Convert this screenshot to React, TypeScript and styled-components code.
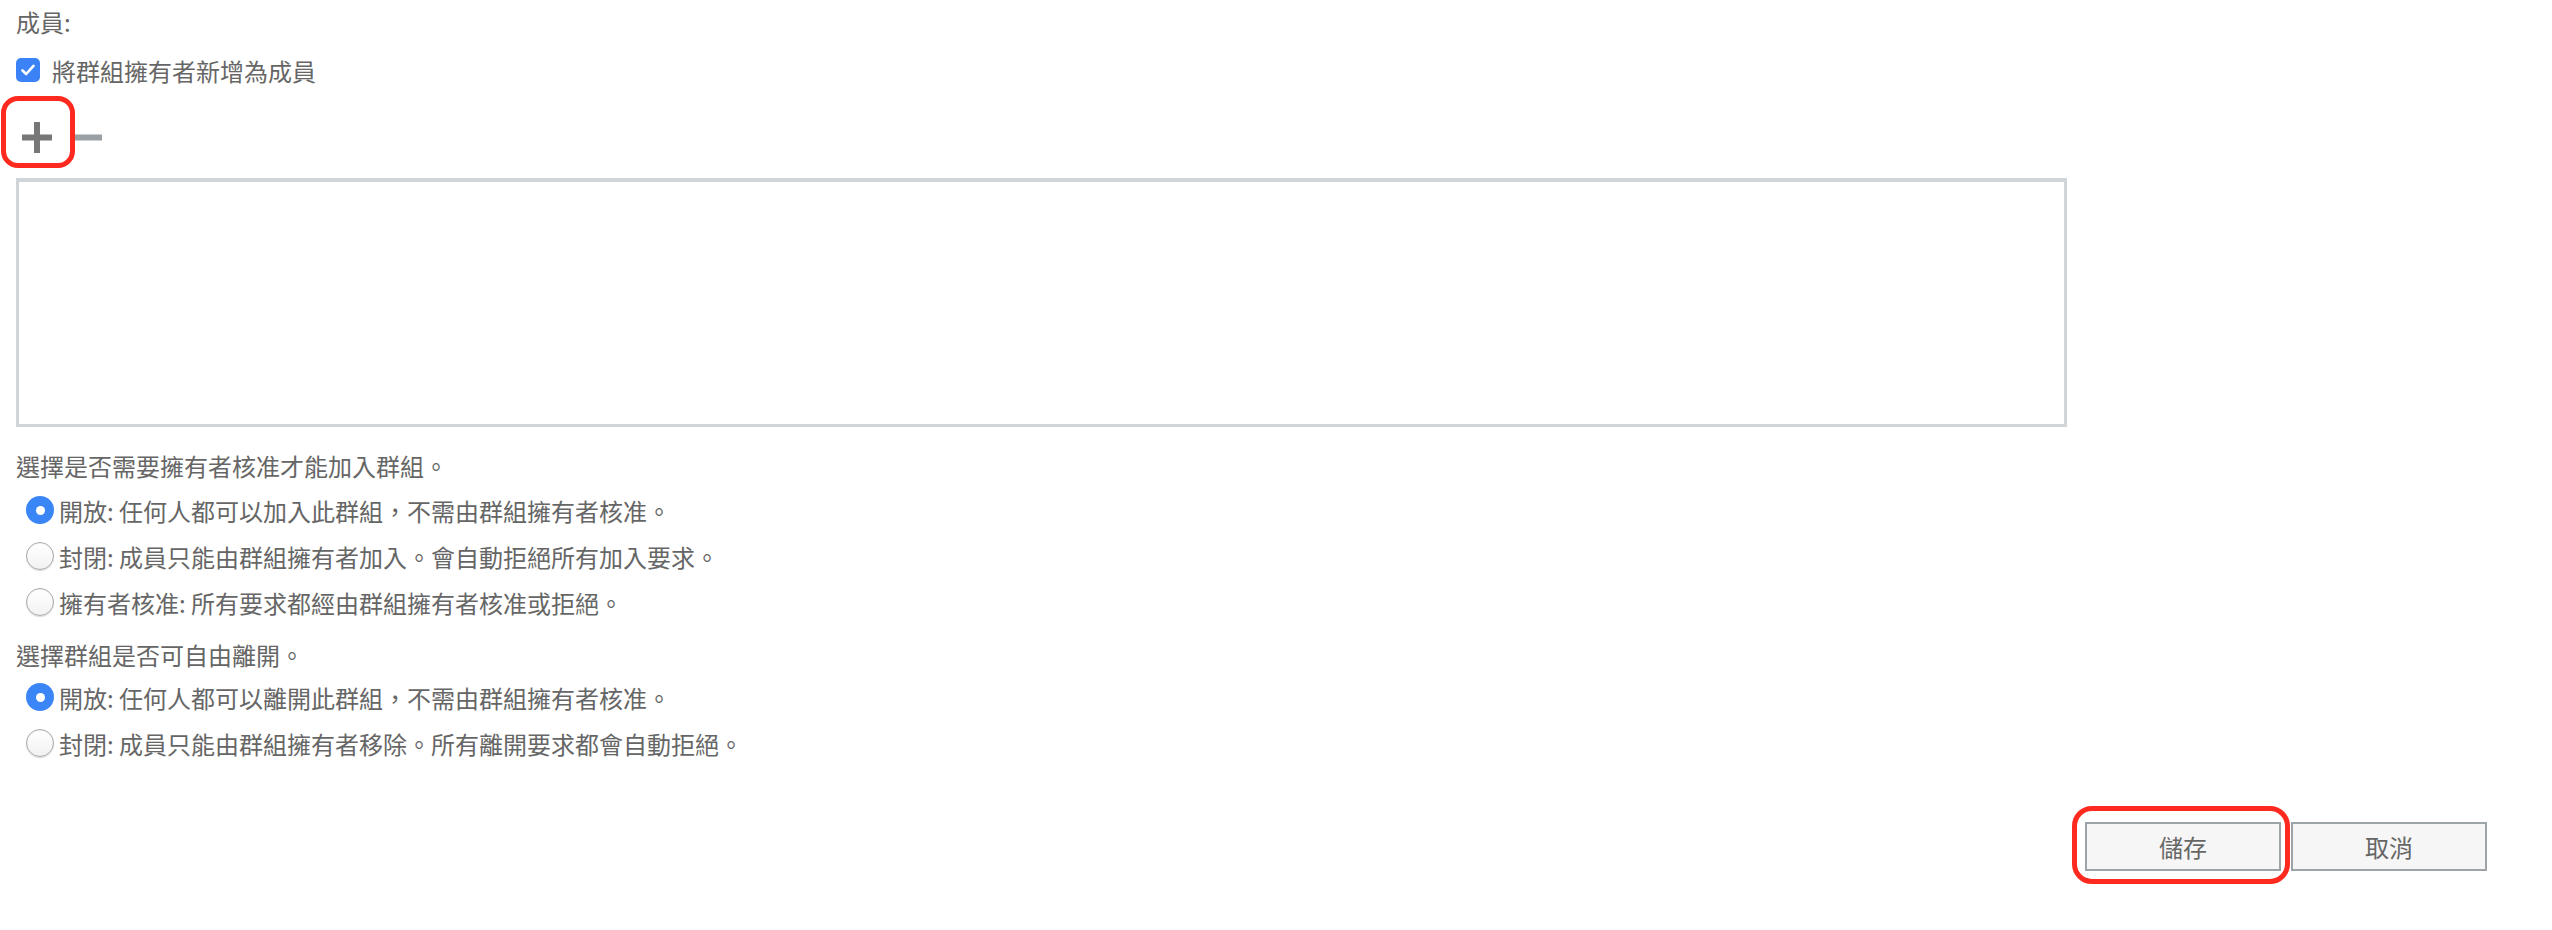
import React from "react";
import styled, { createGlobalStyle } from "styled-components";

const Global = createGlobalStyle`
  html, body { margin: 0; padding: 0; background: #ffffff; }
  body {
    font-family: "Noto Sans CJK TC", "Noto Sans", "Liberation Sans", sans-serif;
    color: #666666;
  }
`;

const Page = styled.div`
  width: 2552px;
  height: 930px;
  box-sizing: border-box;
  padding: 0 16px;
  font-size: 24px;
  display: flex;
  flex-direction: column;
`;

const Label = styled.div<{ $mt: number }>`
  height: 36px;
  line-height: 36px;
  margin-top: ${(p) => p.$mt}px;
  white-space: nowrap;
`;

const CheckRow = styled.label`
  display: flex;
  align-items: center;
  gap: 12px;
  height: 36px;
  margin-top: 12px;
`;

const CheckBox = styled.span`
  width: 24px;
  height: 24px;
  border-radius: 5px;
  background: #3b82f6;
  display: inline-flex;
  align-items: center;
  justify-content: center;
`;

const Toolbar = styled.div`
  display: flex;
  align-items: center;
  gap: 22px;
  height: 40px;
  margin-top: 29px;
  padding-left: 6px;
`;

const IconButton = styled.button`
  border: 0;
  background: transparent;
  padding: 0;
  display: inline-flex;
  align-items: center;
  justify-content: center;
  cursor: pointer;
`;

const Annotated = styled.span<{ $t: number; $r: number; $b: number; $l: number; $rad: number }>`
  position: relative;
  display: inline-flex;
  &::after {
    content: "";
    position: absolute;
    top: -${(p) => p.$t}px;
    right: -${(p) => p.$r}px;
    bottom: -${(p) => p.$b}px;
    left: -${(p) => p.$l}px;
    border: 5px solid #ff2a1f;
    border-radius: ${(p) => p.$rad}px;
    pointer-events: none;
  }
`;

const MemberList = styled.div`
  margin-top: 21px;
  width: 2051px;
  height: 249px;
  box-sizing: border-box;
  border: 3px solid #cfd5d8;
  border-top-width: 4px;
  background: #ffffff;
`;

const RadioGroup = styled.div<{ $mt: number }>`
  display: flex;
  flex-direction: column;
  margin-top: ${(p) => p.$mt}px;
  padding-left: 10px;
`;

const RadioRow = styled.label`
  display: flex;
  align-items: center;
  gap: 5px;
  height: 46px;
  white-space: nowrap;
`;

const RadioCircle = styled.span<{ $checked: boolean }>`
  width: 28px;
  height: 28px;
  box-sizing: border-box;
  border-radius: 50%;
  display: inline-flex;
  align-items: center;
  justify-content: center;
  flex: none;
  background: ${(p) => (p.$checked ? "#3b86f6" : "linear-gradient(#ffffff, #f2f2f2)")};
  border: ${(p) => (p.$checked ? "none" : "1px solid #a9a9a9")};
  box-shadow: ${(p) => (p.$checked ? "none" : "inset 0 1px 1px rgba(0,0,0,0.06), 0 1px 1px rgba(0,0,0,0.15)")};
  &::after {
    content: "";
    display: ${(p) => (p.$checked ? "block" : "none")};
    width: 9px;
    height: 9px;
    border-radius: 50%;
    background: #ffffff;
  }
`;

const Footer = styled.div`
  display: flex;
  justify-content: flex-end;
  gap: 10px;
  margin-top: 56px;
  padding-right: 49px;
`;

const Button = styled.button`
  width: 196px;
  height: 49px;
  box-sizing: border-box;
  border: 2px solid #9ca4a8;
  background: #f6f6f6;
  color: #666666;
  font-family: inherit;
  font-size: 24px;
  padding: 0;
  cursor: pointer;
`;

const PlusIcon = () => (
  <svg width="30" height="31" viewBox="0 0 30 31">
    <rect x="0" y="12.5" width="30" height="6" fill="#777777" />
    <rect x="12" y="0" width="6" height="31" fill="#777777" />
  </svg>
);

const MinusIcon = () => (
  <svg width="28" height="7" viewBox="0 0 28 7">
    <rect x="0" y="0.5" width="28" height="6" fill="#9aa0a3" />
  </svg>
);

const CheckMark = () => (
  <svg width="16" height="14" viewBox="0 0 16 14">
    <path d="M2.5 7.5 L6.2 11 L13.5 2.8" fill="none" stroke="#ffffff" strokeWidth="2.6" strokeLinecap="round" strokeLinejoin="round" />
  </svg>
);

const joinOptions = [
  { text: "開放: 任何人都可以加入此群組，不需由群組擁有者核准。", checked: true },
  { text: "封閉: 成員只能由群組擁有者加入。會自動拒絕所有加入要求。", checked: false },
  { text: "擁有者核准: 所有要求都經由群組擁有者核准或拒絕。", checked: false },
];

const leaveOptions = [
  { text: "開放: 任何人都可以離開此群組，不需由群組擁有者核准。", checked: true },
  { text: "封閉: 成員只能由群組擁有者移除。所有離開要求都會自動拒絕。", checked: false },
];

export default function App() {
  return (
    <>
      <Global />
      <Page>
        <Label $mt={4}>成員:</Label>
        <CheckRow>
          <CheckBox>
            <CheckMark />
          </CheckBox>
          <span>將群組擁有者新增為成員</span>
        </CheckRow>
        <Toolbar>
          <Annotated $t={26} $r={23} $b={15} $l={21} $rad={17}>
            <IconButton aria-label="新增">
              <PlusIcon />
            </IconButton>
          </Annotated>
          <IconButton aria-label="移除">
            <MinusIcon />
          </IconButton>
        </Toolbar>
        <MemberList />
        <Label $mt={21}>選擇是否需要擁有者核准才能加入群組。</Label>
        <RadioGroup $mt={3}>
          {joinOptions.map((o) => (
            <RadioRow key={o.text}>
              <RadioCircle $checked={o.checked} />
              <span>{o.text}</span>
            </RadioRow>
          ))}
        </RadioGroup>
        <Label $mt={12}>選擇群組是否可自由離開。</Label>
        <RadioGroup $mt={1}>
          {leaveOptions.map((o) => (
            <RadioRow key={o.text}>
              <RadioCircle $checked={o.checked} />
              <span>{o.text}</span>
            </RadioRow>
          ))}
        </RadioGroup>
        <Footer>
          <Annotated $t={16} $r={9} $b={13} $l={13} $rad={20}>
            <Button>儲存</Button>
          </Annotated>
          <Button>取消</Button>
        </Footer>
      </Page>
    </>
  );
}
